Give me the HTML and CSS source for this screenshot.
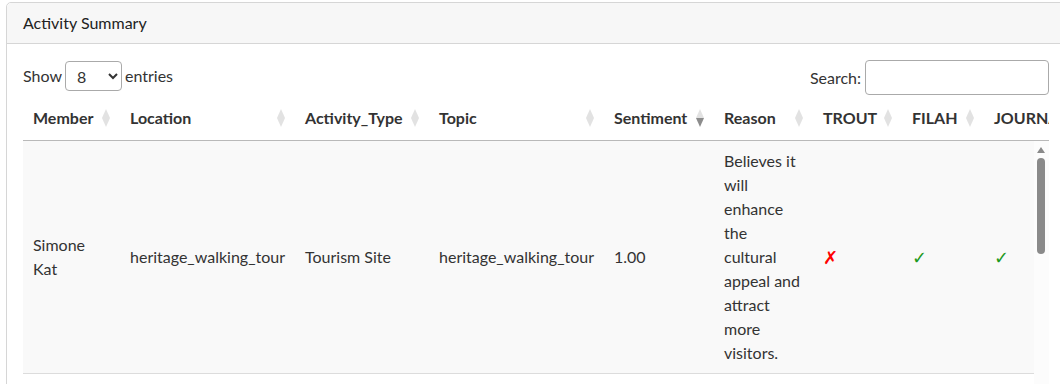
FILE: index.html
```html
<!DOCTYPE html>
<html lang="en">
<head>
    <meta charset="UTF-8">
    <meta name="viewport" content="width=device-width, initial-scale=1.0">
    <title>Activity Summary</title>
    <link rel="stylesheet" href="styles.css">
</head>
<body>
    <div class="card">
        <div class="card-header">Activity Summary</div>
        <div class="card-body">
            <div class="dt-top">
                <label class="dt-length">Show
                    <select>
                        <option>8</option>
                        <option>16</option>
                        <option>32</option>
                    </select>
                    entries</label>
                <label class="dt-search">Search:<input type="search"></label>
            </div>

            <div class="scroll-head">
                <table class="dt">
                    <colgroup>
                        <col class="c-member"><col class="c-location"><col class="c-type"><col class="c-topic">
                        <col class="c-sent"><col class="c-reason"><col class="c-trout"><col class="c-filah"><col class="c-journ">
                    </colgroup>
                    <thead>
                        <tr>
                            <th class="sorting">Member</th>
                            <th class="sorting">Location</th>
                            <th class="sorting">Activity_Type</th>
                            <th class="sorting">Topic</th>
                            <th class="sorting sorting-desc">Sentiment</th>
                            <th class="sorting">Reason</th>
                            <th class="sorting">TROUT</th>
                            <th class="sorting">FILAH</th>
                            <th class="sorting">JOURNALIST</th>
                        </tr>
                    </thead>
                </table>
            </div>

            <div class="scroll-body">
                <div class="scroll-view">
                    <table class="dt">
                        <colgroup>
                            <col class="c-member"><col class="c-location"><col class="c-type"><col class="c-topic">
                            <col class="c-sent"><col class="c-reason"><col class="c-trout"><col class="c-filah"><col class="c-journ">
                        </colgroup>
                        <tbody>
                            <tr class="odd">
                                <td>Simone Kat</td>
                                <td>heritage_walking_tour</td>
                                <td>Tourism Site</td>
                                <td>heritage_walking_tour</td>
                                <td>1.00</td>
                                <td>Believes it will enhance the cultural appeal and attract more visitors.</td>
                                <td class="no">✗</td>
                                <td class="yes">✓</td>
                                <td class="yes">✓</td>
                            </tr>
                            <tr>
                                <td>Ed Helmsley</td>
                                <td>harbor_front</td>
                                <td>Tourism Site</td>
                                <td>waterfront_upgrade</td>
                                <td>0.95</td>
                                <td>Expects the new boardwalk to bring more foot traffic to local shops.</td>
                                <td class="yes">✓</td>
                                <td class="no">✗</td>
                                <td class="yes">✓</td>
                            </tr>
                            <tr class="odd">
                                <td>Rosa Lind</td>
                                <td>old_market_square</td>
                                <td>Community Event</td>
                                <td>night_market</td>
                                <td>0.90</td>
                                <td>Thinks the evening stalls will help small vendors earn more income.</td>
                                <td class="no">✗</td>
                                <td class="yes">✓</td>
                                <td class="no">✗</td>
                            </tr>
                            <tr>
                                <td>Omar Fahd</td>
                                <td>city_museum</td>
                                <td>Tourism Site</td>
                                <td>heritage_walking_tour</td>
                                <td>0.85</td>
                                <td>Sees the tour as a good way to teach younger residents about the past.</td>
                                <td class="yes">✓</td>
                                <td class="yes">✓</td>
                                <td class="no">✗</td>
                            </tr>
                        </tbody>
                    </table>
                </div>
                <div class="scrollbar">
                    <div class="scroll-up"></div>
                    <div class="scroll-thumb"></div>
                </div>
            </div>
        </div>
    </div>
</body>
</html>
```

FILE: styles.css
```css
* {
    box-sizing: border-box;
}

html {
    overflow: hidden;
}

body {
    margin: 0;
    font-family: Lato, "Noto Sans", sans-serif;
    font-size: 16px;
    line-height: 24px;
    color: #333;
    background: #fff;
}

.card {
    margin: 2px -6px 0 6px;
    border: 1px solid #d6d6d6;
    border-radius: 5px;
    background: #fff;
}

.card-header {
    padding: 8px 16px;
    background: #f7f7f7;
    border-bottom: 1px solid #d6d6d6;
    border-radius: 5px 5px 0 0;
    color: #222;
}

.card-body {
    padding: 16px 16px 0 16px;
}

.dt-top {
    display: flex;
    justify-content: space-between;
    align-items: flex-start;
}

.dt-length,
.dt-search {
    display: flex;
    align-items: center;
}

.dt-length {
    margin-top: 1px;
}

.dt-length select {
    width: 57px;
    height: 30px;
    margin: 0 3px;
    padding: 0 4px 0 7px;
    font-family: inherit;
    font-size: 16px;
    color: #333;
    border: 1px solid #aaa;
    border-radius: 4px;
    background: #fff;
}

.dt-search input {
    width: 184px;
    height: 35px;
    margin-left: 4px;
    border: 1px solid #aaa;
    border-radius: 4px;
    background: #fff;
}

.scroll-head {
    overflow: hidden;
    border-bottom: 1px solid #b9b9b9;
}

.scroll-body {
    display: flex;
    height: 420px;
}

.scroll-view {
    flex: 1;
    overflow: hidden;
}

.dt {
    table-layout: fixed;
    border-collapse: collapse;
    width: 1081px;
}

.c-member { width: 97px; }
.c-location { width: 175px; }
.c-type { width: 134px; }
.c-topic { width: 175px; }
.c-sent { width: 110px; }
.c-reason { width: 99px; }
.c-trout { width: 89px; }
.c-filah { width: 82px; }
.c-journ { width: 120px; }

.dt th {
    position: relative;
    padding: 11px 10px 10px;
    text-align: left;
    font-weight: bold;
    white-space: nowrap;
    color: #333;
}

.dt td {
    padding: 8px 10px;
    vertical-align: middle;
    border-bottom: 1px solid #dcdcdc;
}

.dt tr.odd td {
    background: #f9f9f9;
}

/* sort arrows */
.sorting::before,
.sorting::after {
    content: "";
    position: absolute;
    right: 10px;
    border-left: 4px solid transparent;
    border-right: 4px solid transparent;
}

.sorting::before {
    bottom: 50%;
    border-bottom: 9px solid #e2e2e2;
}

.sorting::after {
    top: 50%;
    border-top: 9px solid #e2e2e2;
}

.sorting-desc::after {
    border-top-color: #8c8c8c;
}

.no,
.yes {
    font-size: 18px;
}

.no {
    color: #f00;
}

.yes {
    color: #1e9a1e;
}

/* drawn scrollbar of the body */
.scrollbar {
    width: 15px;
    background: #fcfcfc;
    padding: 6px 4px 0 3px;
}

.scroll-up {
    width: 0;
    height: 0;
    border-left: 4px solid transparent;
    border-right: 4px solid transparent;
    border-bottom: 6px solid #8a8a8a;
}

.scroll-thumb {
    margin-top: 5px;
    width: 8px;
    height: 96px;
    border-radius: 4px;
    background: #8a8a8a;
}
```
